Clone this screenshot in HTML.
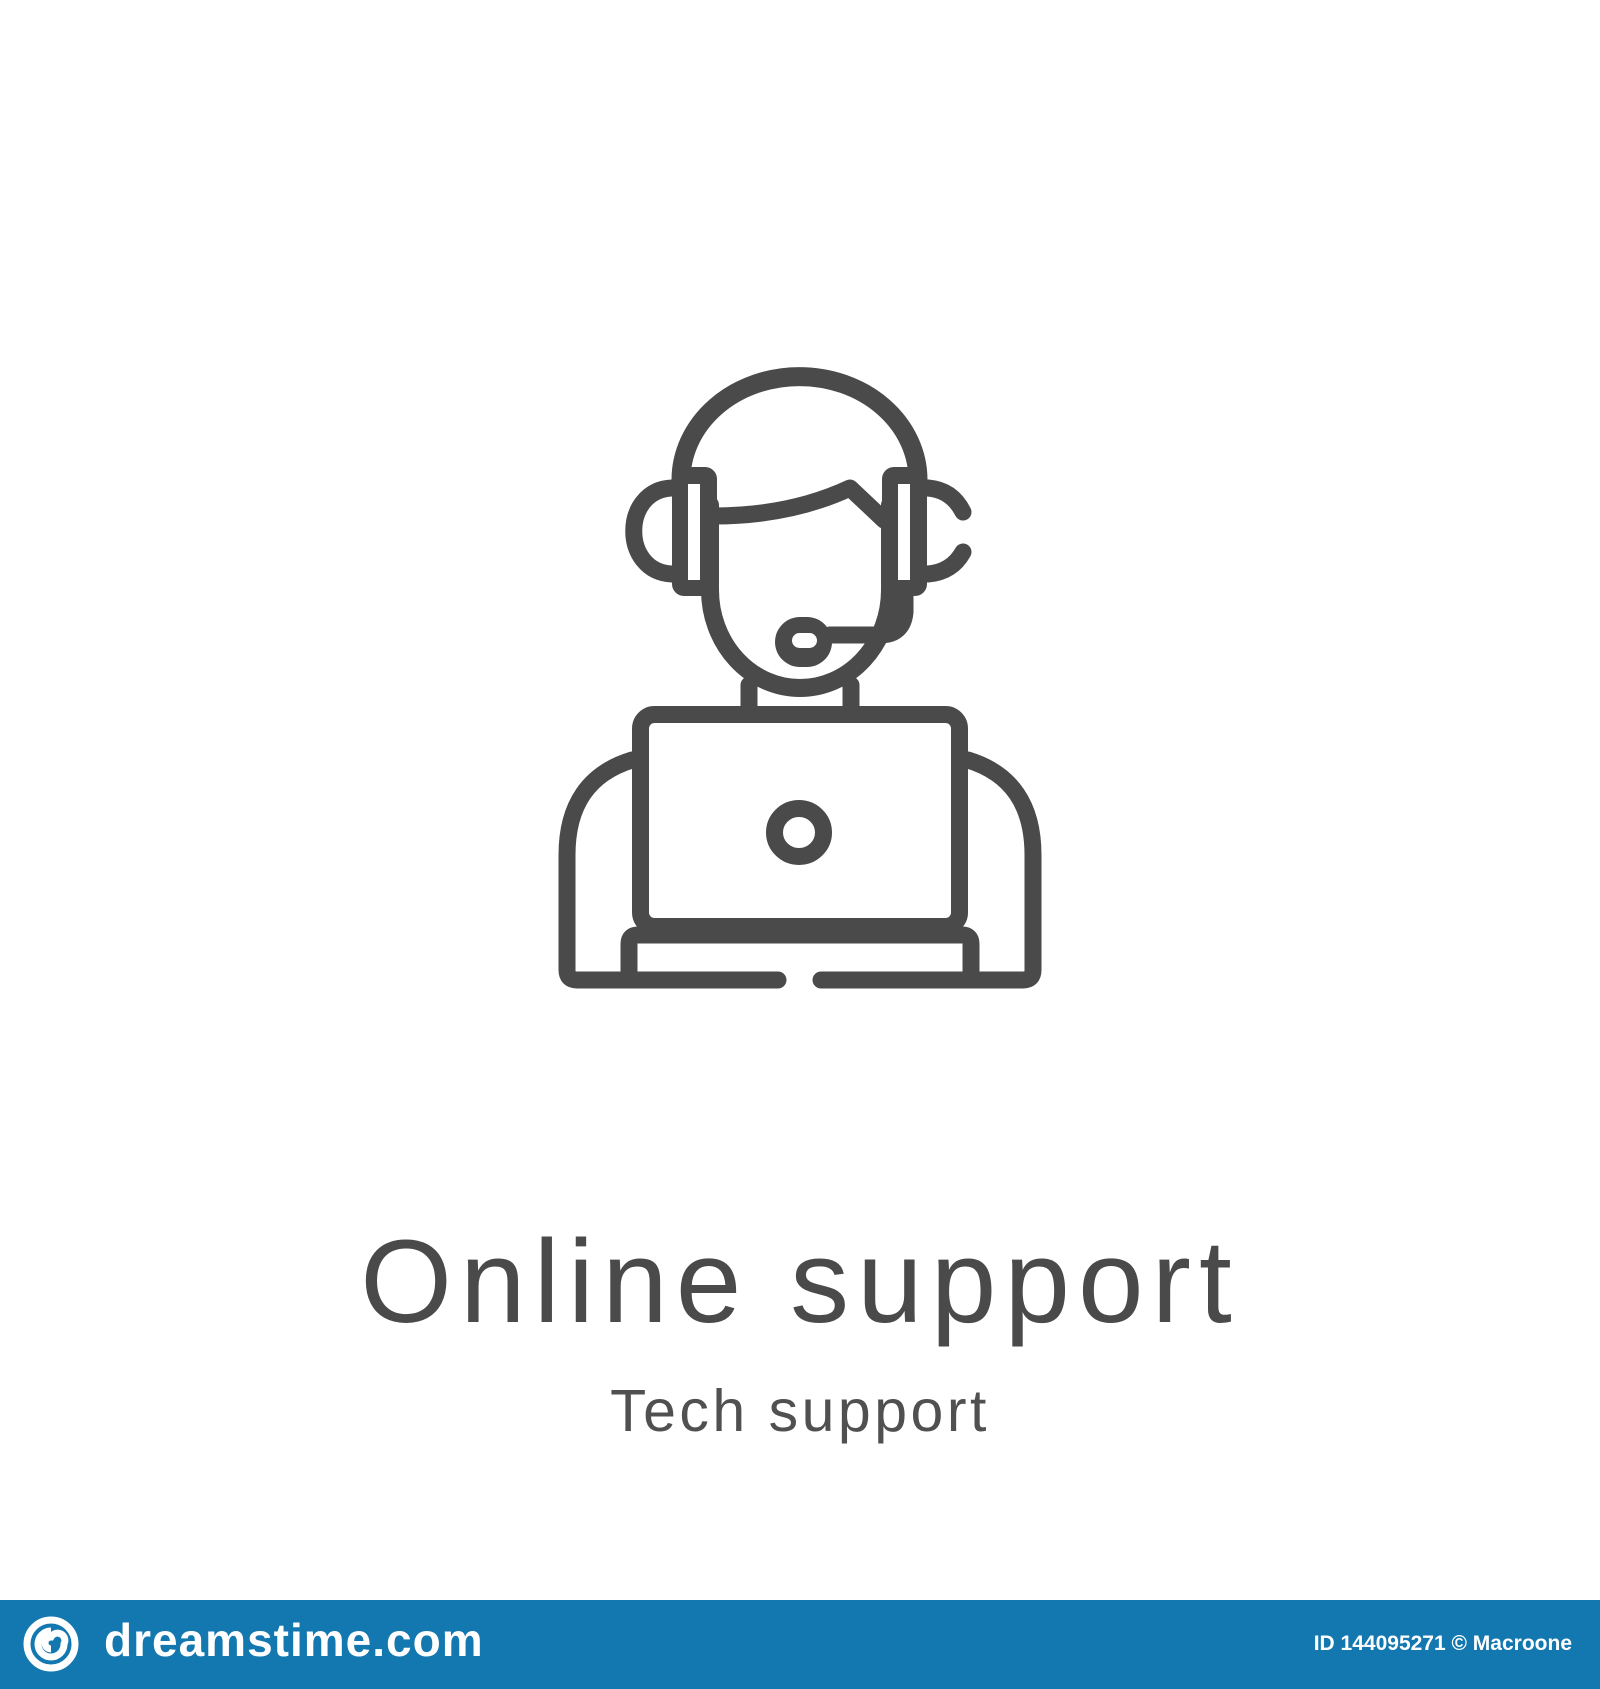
<!DOCTYPE html>
<html><head><meta charset="utf-8"><style>
html,body{margin:0;padding:0;background:#fff;}
body{width:1600px;height:1689px;position:relative;overflow:hidden;font-family:"Liberation Sans",sans-serif;}
.t1{position:absolute;left:0;width:1600px;text-align:center;top:1217px;font-size:118px;line-height:130px;color:#4a4a4a;letter-spacing:8px;}
.t2{position:absolute;left:0;width:1600px;text-align:center;top:1378px;font-size:59px;line-height:66px;color:#505050;letter-spacing:3.5px;}
.foot{position:absolute;left:0;top:1600px;width:1600px;height:89px;background:#1377b0;}
.logo{position:absolute;left:104px;top:10px;font-size:46px;color:#fff;line-height:60px;letter-spacing:1px;font-weight:bold;}
.id{position:absolute;right:28px;top:31px;font-size:21px;font-weight:bold;color:#fff;line-height:26px;}
</style></head><body>
<svg width="1600" height="1600" style="position:absolute;left:0;top:0">
<g fill="none" stroke="#4a4a4a" stroke-width="17" stroke-linecap="round" stroke-linejoin="round">
<path stroke-width="19" d="M681 480 A118 103 0 0 1 918 480"/>
<path stroke-width="18" d="M710 505 L710 590 A90 98 0 0 0 890 590 L890 505"/>
<path d="M714 516 Q790 516 850 488 L884 520"/>
<path d="M672 488 C621 490 621 572 672 574"/>
<path d="M928 488 Q952 490 963 512"/>
<path d="M928 574 Q952 572 963 552"/>
<path d="M905 596 L905 612 Q903 635 880 635 L830 635"/>
<path d="M749 685 L749 712 M851 685 L851 712"/>
<rect x="640.5" y="714.5" width="319" height="212" rx="14"/>
<path d="M629 980 L629 944 Q629 935 638 935 L962 935 Q971 935 971 944 L971 980"/>
<path d="M632 760 Q567 780 567 855 L567 970 Q567 980 577 980 L778 980"/>
<path d="M968 760 Q1033 780 1033 855 L1033 970 Q1033 980 1023 980 L821 980"/>
<ellipse cx="799" cy="832.5" rx="24.5" ry="24"/>
</g>
<rect x="672" y="467" width="45" height="129" rx="12" fill="#4a4a4a"/>
<rect x="688" y="484" width="12" height="96" fill="#fff"/>
<rect x="882" y="467" width="45" height="129" rx="12" fill="#4a4a4a"/>
<rect x="898" y="484" width="12" height="96" fill="#fff"/>
<rect x="775" y="617" width="57" height="50" rx="25" fill="#4a4a4a"/>
<rect x="792" y="633" width="25" height="15" rx="7.5" fill="#fff"/>
</svg>
<div class="t1">Online support</div>
<div class="t2">Tech support</div>
<div class="foot">
<svg width="70" height="70" style="position:absolute;left:17px;top:9px" fill="none" stroke="#fff" stroke-width="7">
<circle cx="34" cy="35" r="24"/>
<path d="M34 22 A13 13 0 1 0 47 35 A7 7 0 0 0 34 28 A6 6 0 0 0 34 40"/>
</svg>
<div class="logo">dreamstime.com</div>
<div class="id">ID 144095271 © Macroone</div>
</div>
</body></html>
